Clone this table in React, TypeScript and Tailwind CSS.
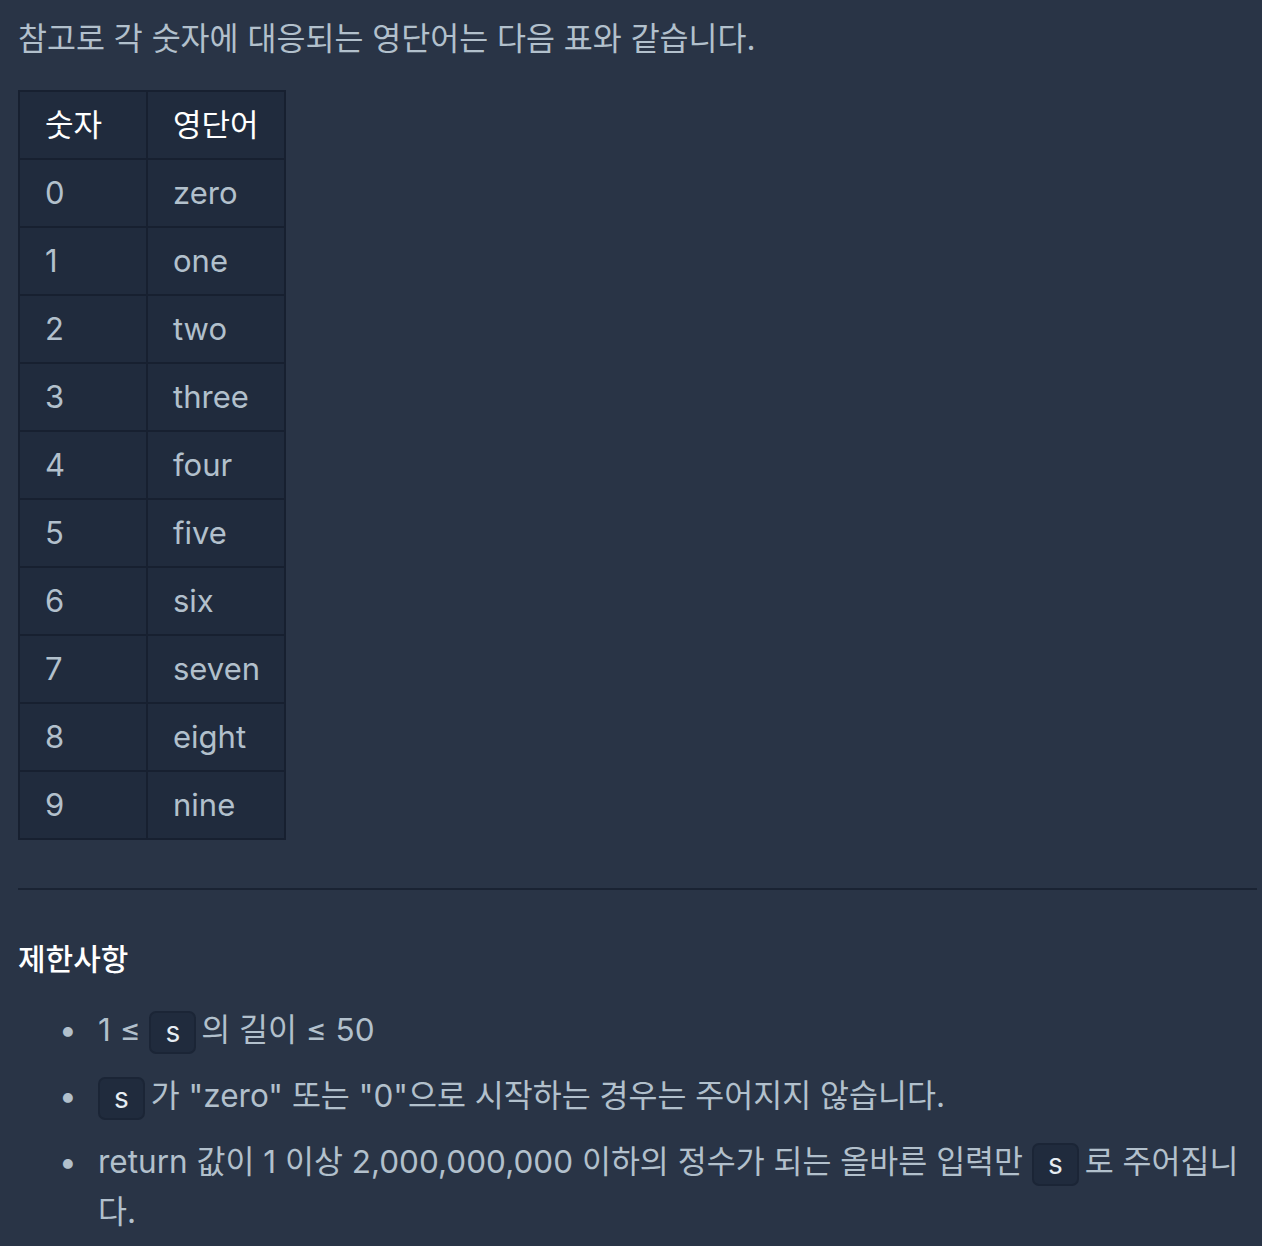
import React from "react";

const rows: [string, string][] = [
  ["0", "zero"],
  ["1", "one"],
  ["2", "two"],
  ["3", "three"],
  ["4", "four"],
  ["5", "five"],
  ["6", "six"],
  ["7", "seven"],
  ["8", "eight"],
  ["9", "nine"],
];

function Code({ children, className = "" }: { children: React.ReactNode; className?: string }) {
  return (
    <code
      className={`inline-block rounded-[7px] border-2 border-[#1b2536] bg-[#202b3d] px-[14px] align-middle text-[28px] leading-[39px] text-[#e6edf3] ${className}`}
      style={{ fontFamily: "Inter, 'Noto Sans CJK KR', sans-serif" }}
    >
      {children}
    </code>
  );
}

function Li({ children, last }: { children: React.ReactNode; last?: boolean }) {
  return (
    <li className={`flex ${last ? "" : "mb-[16px]"}`}>
      <span className="w-[80px] shrink-0 pl-[41px] text-[#b2c0cc]">•</span>
      <span>{children}</span>
    </li>
  );
}

export default function App() {
  return (
    <div
      className="min-h-[1246px] w-full bg-[#293446] pl-[18px] pr-[5px] text-[31.5px] leading-[50px] text-[#b2c0cc]"
      style={{ fontFamily: "Inter, 'Noto Sans CJK KR', sans-serif" }}
    >
      <p className="pt-[14px]">참고로 각 숫자에 대응되는 영단어는 다음 표와 같습니다.</p>
      <table className="mt-[26px] border-collapse border-2 border-[#172030] bg-[#202b3d] text-[31px]">
        <thead>
          <tr>
            <th className="h-[68px] w-[128px] border-2 border-[#172030] pl-[25px] text-left font-normal text-white">숫자</th>
            <th className="h-[68px] w-[138px] border-2 border-[#172030] pl-[25px] pr-[10px] text-left font-normal text-white">영단어</th>
          </tr>
        </thead>
        <tbody>
          {rows.map(([n, w]) => (
            <tr key={n}>
              <td className="h-[68px] border-2 border-[#172030] pl-[25px]">{n}</td>
              <td className="h-[68px] border-2 border-[#172030] pl-[25px]">{w}</td>
            </tr>
          ))}
        </tbody>
      </table>
      <hr className="mt-[48px] border-0 border-t-2 border-[#1a2333]" />
      <h5 className="mt-[44px] text-[30px] font-medium text-white">제한사항</h5>
      <ul className="mt-[21px]">
        <Li>
          1 ≤ <Code className="mr-[5px]">s</Code>의 길이 ≤ 50
        </Li>
        <Li>
          <Code className="mr-[6px]">s</Code>가 "zero" 또는 "0"으로 시작하는 경우는 주어지지 않습니다.
        </Li>
        <Li last>
          <span>return 값이 1 이상 2,000,000,000 이하의 정수가 되는 올바른 입력만 </span>
          <Code className="mr-[6px]">s</Code>
          <span>로 주어집니</span>
          <span>다.</span>
        </Li>
      </ul>
    </div>
  );
}
